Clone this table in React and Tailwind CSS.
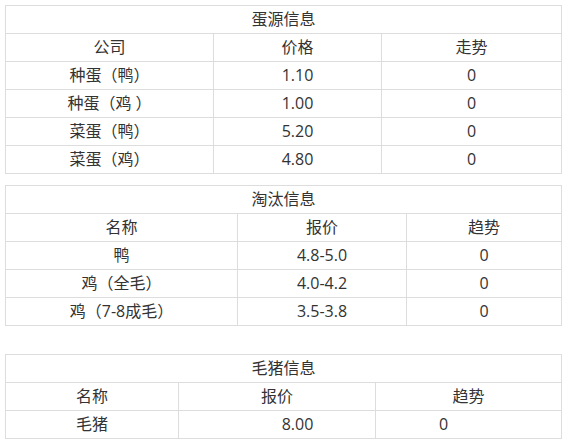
import React from 'react';

const eggs = [
  ['种蛋（鸭）', '1.10', '0'],
  ['种蛋（鸡 ）', '1.00', '0'],
  ['菜蛋（鸭）', '5.20', '0'],
  ['菜蛋（鸡）', '4.80', '0'],
];

const culls = [
  ['鸭', '4.8-5.0', '0'],
  ['鸡（全毛）', '4.0-4.2', '0'],
  ['鸡（7-8成毛）', '3.5-3.8', '0'],
];

const cell = 'border border-[#dddddd] h-[28px] p-0 text-center leading-[27px]';

const InfoTable = ({ title, head, rows, widths, className = '', cellPads = [] }) => (
  <table className={`table-fixed border-collapse w-[556px] ${className}`}>
    <colgroup>
      {widths.map((w, i) => (
        <col key={i} style={{ width: w }} />
      ))}
    </colgroup>
    <tbody>
      <tr>
        <td colSpan={3} className={cell}>{title}</td>
      </tr>
      <tr>
        {head.map((h, i) => (
          <td key={i} className={cell}>{h}</td>
        ))}
      </tr>
      {rows.map((r, i) => (
        <tr key={i}>
          {r.map((v, j) => (
            <td key={j} className={`${cell} ${cellPads[j] || ''}`}>{v}</td>
          ))}
        </tr>
      ))}
    </tbody>
  </table>
);

export default function App() {
  return (
    <div
      className="w-[564px] h-[441px] bg-white px-[5px] pt-[5px] text-[16px] text-[#333333]"
      style={{ fontFamily: '"Open Sans", "Noto Sans CJK SC", sans-serif' }}
    >
      <InfoTable
        title="蛋源信息"
        head={['公司', '价格', '走势']}
        rows={eggs}
        widths={['208px', '168px', '180px']}
      />
      <InfoTable
        title="淘汰信息"
        head={['名称', '报价', '趋势']}
        rows={culls}
        widths={['232px', '169px', '155px']}
        className="mt-[11px]"
      />
      <InfoTable
        title="毛猪信息"
        head={['名称', '报价', '趋势']}
        rows={[['毛猪', '8.00', '0']]}
        widths={['173px', '197px', '186px']}
        className="mt-[28px]"
        cellPads={['', 'pl-[41px]', 'pr-[50px]']}
      />
    </div>
  );
}
